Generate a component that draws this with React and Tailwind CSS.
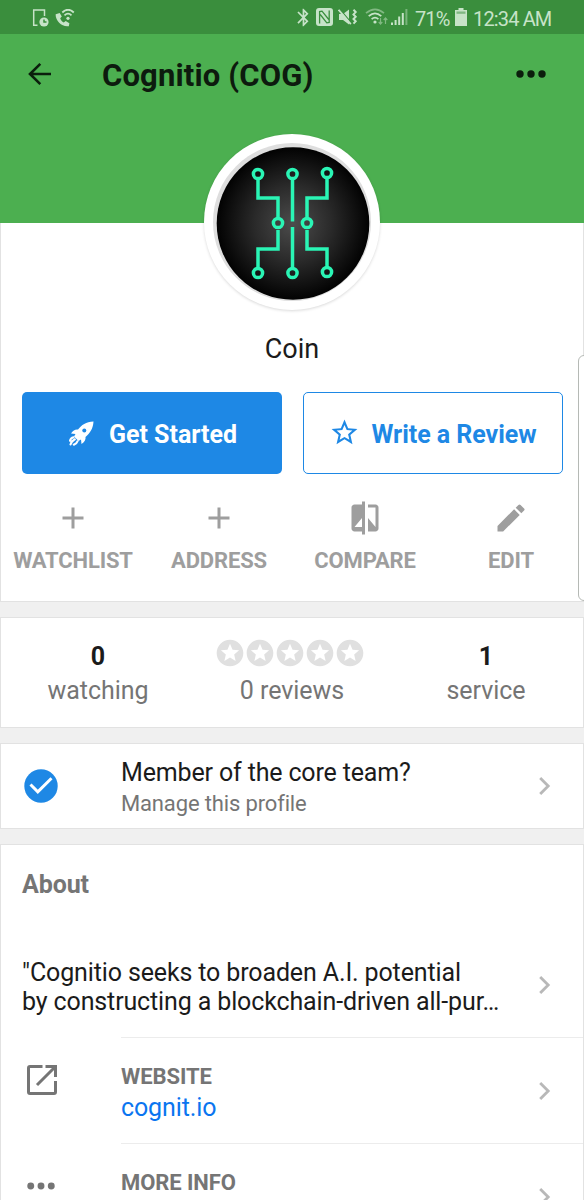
import { MdAdd, MdBluetooth, MdCompare, MdEdit, MdStarBorder, MdStars } from 'react-icons/md';

const STATS = [
  { value: '0', label: 'watching' },
  { rating: true, label: '0 reviews' },
  { value: '1', label: 'service' },
];

const ACTIONS = [
  { label: 'WATCHLIST', icon: MdAdd },
  { label: 'ADDRESS', icon: MdAdd },
  { label: 'COMPARE', icon: MdCompare },
  { label: 'EDIT', icon: MdEdit },
];

export default function App() {
  return (
    <div className="relative w-[584px] h-[1200px] overflow-hidden bg-[#f0f0f0] text-[#1b1b1b] font-[Roboto,sans-serif]">
      <StatusBar />
      <Header />
      <Profile />

      {/* Stats */}
      <div className="mt-[15px] h-[111px] bg-white border border-[#e2e2e2] grid grid-cols-3 pt-[22px]">
        {STATS.map((s) => (
          <div key={s.label} className="flex flex-col items-center">
            <div className="h-[34px] flex items-center text-[25px] font-bold">
              {s.rating ? <Stars /> : s.value}
            </div>
            <div className="h-[34px] text-[25px] leading-[33px] tracking-[-0.05px] text-[#757575]">{s.label}</div>
          </div>
        ))}
      </div>

      {/* Core team */}
      <div className="mt-[15px] h-[86px] bg-white border border-[#e2e2e2] flex items-center">
        <div className="w-[120px] pl-[23px]">
          <svg width="34" height="34" viewBox="0 0 34 34">
            <circle cx="17" cy="17" r="16.7" fill="#1e88e5" />
            <path d="M6.5 15.5l7.3 7.3L27.5 9.2" fill="none" stroke="#fff" strokeWidth="3" />
          </svg>
        </div>
        <div className="flex-1 pt-[3px]">
          <div className="text-[25px] leading-[32px] tracking-[-0.15px]">Member of the core team?</div>
          <div className="text-[22px] leading-[30px] tracking-[-0.15px] text-[#757575]">Manage this profile</div>
        </div>
        <Chevron />
      </div>

      {/* About */}
      <div className="mt-[15px] h-[420px] bg-white border border-[#e2e2e2]">
        <h2 className="h-[88px] pl-[21px] pt-[25px] text-[25px] leading-[30px] tracking-[-0.1px] font-bold text-[#757575]">About</h2>
        <div className="h-[104px] flex items-center pl-[21px]">
          <p className="flex-1 pt-[4px] text-[25px] leading-[29.5px] tracking-[-0.13px] whitespace-nowrap">
            "Cognitio seeks to broaden A.I. potential
            <br />
            by constructing a blockchain-driven all-pur…
          </p>
          <Chevron />
        </div>
        <Row label="WEBSITE" icon={<OpenIcon />}>
          <div className="text-[25px] leading-[32px] tracking-[-0.12px] text-[#0a75f0]">cognit.io</div>
        </Row>
        <Row label="MORE INFO" icon={<Dots className="text-[#757575] ml-px" width={28} />}>
          <div className="h-[32px]" />
        </Row>
      </div>

      {/* Edge panel handle */}
      <div className="absolute left-[578px] top-[355px] w-[12px] h-[246px] rounded-[7px] bg-white border border-[#b5b9b5]" />
    </div>
  );
}

function StatusBar() {
  return (
    <div className="h-[34px] bg-[#3a8e3d] text-[#c7e3c8] flex items-center justify-between pl-[32px] pr-[32px]">
      <div className="flex items-center gap-[6px] pt-px">
        <svg width="17" height="18" viewBox="0 0 17 18" fill="none" stroke="currentColor" strokeWidth="1.5">
          <path d="M5.5 16.3H1.7V1h10.8v6" />
          <circle cx="12" cy="13" r="4.6" fill="currentColor" stroke="none" />
          <path d="M12 10.4V13h2.5" stroke="#3a8e3d" />
        </svg>
        <svg width="20" height="18" viewBox="0 0 20 18" fill="none" stroke="currentColor">
          <path d="M.7 5.2C0 11.5 7 18.5 13.8 17.2l.6-3-3.7-2.2-2 1.5C7 12.6 5.7 10.8 5.2 9.2l1.6-1.6L4.7 3.9z" fill="currentColor" stroke="none" />
          <path d="M7.3 3.5Q13-2 18.8 3.5M9.5 6.3Q13 3 16.5 6.3" strokeWidth="1.8" />
          <circle cx="13" cy="9.3" r="1.6" fill="currentColor" stroke="none" />
        </svg>
      </div>
      <div className="flex items-center">
        <MdBluetooth size={21} className="mr-[2px]" />
        <svg width="17" height="18" viewBox="0 0 17 18" className="mr-[5px]">
          <rect width="17" height="18" rx="3" fill="currentColor" />
          <path d="M3.6 15.5V3.6l2.4-.4 6.8 8.3M13.2 2.5v11.9l-2.4.4L4.2 6.5" fill="none" stroke="#3a8e3d" strokeWidth="1.3" />
        </svg>
        <svg width="20" height="18" viewBox="0 0 20 18" className="mr-[7px]">
          <path d="M1 6h4l6-4.5v15L5 12H1z" fill="currentColor" />
          <path d="M1.6 1L13.5 15" stroke="#3a8e3d" strokeWidth="1.2" />
          <path d="M.6 1.8L12.8 16.2" stroke="currentColor" strokeWidth="1.8" />
          <path d="M15.5 1.8l2.2 2.3-2.2 2.3 2.2 2.3-2.2 2.3 2.2 2.3-2.2 2.3" fill="none" stroke="currentColor" strokeWidth="2" />
        </svg>
        <svg width="24" height="18" viewBox="0 0 24 18" fill="none" stroke="currentColor" strokeWidth="1.7" className="mr-[2px]">
          <path d="M1 5.2Q10-2.6 19 5.2" opacity=".5" />
          <path d="M3.7 8.2Q10 2.5 16.3 8.2M6.6 11.2Q10 8 13.4 11.2" />
          <circle cx="10" cy="14" r="1.6" fill="currentColor" stroke="none" />
          <path d="M15.5 10v6m-1.8-2l1.8 2 1.8-2M20.5 16v-6m-1.8 2l1.8-2 1.8 2" strokeWidth="1.2" opacity=".5" />
        </svg>
        <svg width="17" height="18" viewBox="0 0 17 18" fill="currentColor" className="mr-[7px]">
          <path d="M0 14.5h2V17H0zM3.6 12h2v5h-2zM7.2 8.5h2V17h-2zM10.8 5h2v12h-2z" />
          <path d="M14.4 1h2v16h-2z" opacity=".45" />
        </svg>
        <span className="w-[33px] whitespace-nowrap text-[20px] leading-[34px] tracking-[-0.9px] pt-[3px]">71%</span>
        <svg width="12" height="18" viewBox="0 0 12 18" fill="currentColor" className="ml-[7px] mr-[6px]">
          <path d="M3.5 0h5v2H12v16H0V2h3.5z" />
          <path d="M1.5 3.5h9v2.3h-9z" fill="#3a8e3d" opacity=".5" />
        </svg>
        <span className="w-[79px] whitespace-nowrap text-[20px] leading-[34px] tracking-[-0.85px] pt-[3px]">12:34 AM</span>
      </div>
    </div>
  );
}

function Header() {
  return (
    <div className="h-[189px] bg-[#4caf50] text-[#0b1e0c]">
      <div className="h-[80px] flex items-center pl-[28px] pr-[38px]">
        <svg width="24" height="24" viewBox="0 0 24 24" fill="none" stroke="currentColor" strokeWidth="2.6">
          <path d="M23 12H2.5M12.3 1.8L2 12l10.3 10.2" />
        </svg>
        <h1 className="ml-[50px] mt-[4px] text-[31px] leading-[40px] tracking-[0.15px] font-bold text-[#0d1b0e] flex-1">Cognitio (COG)</h1>
        <Dots width={30} />
      </div>
    </div>
  );
}

function Profile() {
  return (
    <div className="h-[379px] bg-white border-x border-b border-[#e2e2e2] flex flex-col items-center">
      <div className="-mt-[89px] size-[176px] shrink-0 rounded-full bg-white shadow-[0_1px_3px_rgba(0,0,0,0.15)] flex items-center justify-center relative">
        <Logo />
      </div>
      <div className="mt-[22px] text-[27px] leading-[34px]">Coin</div>

      <div className="mt-[26px] flex gap-[21px] text-[25px] font-bold">
        <button className="w-[260px] h-[82px] pt-[3px] pl-[3px] rounded-[5px] bg-[#1e88e5] text-white flex items-center justify-center">
          <RocketIcon />
          <span>Get Started</span>
        </button>
        <button className="w-[260px] h-[82px] pt-[3px] rounded-[5px] border-[1.5px] border-[#1e88e5] text-[#1e88e5] flex items-center justify-center">
          <MdStarBorder size={31} className="mr-[12px] -mt-[4px]" />
          <span className="tracking-[-0.05px]">Write a Review</span>
        </button>
      </div>

      <div className="mt-[24px] w-[584px] grid grid-cols-4 text-[#9e9e9e]">
        {ACTIONS.map((a) => (
          <div key={a.label} className="flex flex-col items-center">
            <div className="h-[40px] flex items-center">
              <a.icon size={36} />
            </div>
            <div className="mt-[6px] text-[22px] leading-[34px] tracking-[-0.15px] font-bold">{a.label}</div>
          </div>
        ))}
      </div>
    </div>
  );
}

function Logo() {
  return (
    <svg width="160" height="160" viewBox="0 0 160 160">
      <defs>
        <radialGradient id="coin">
          <stop offset="0" stopColor="#4c4c4c" />
          <stop offset=".5" stopColor="#2a2a2a" />
          <stop offset="1" stopColor="#020202" />
        </radialGradient>
      </defs>
      <circle cx="80" cy="80" r="79" fill="#dedede" />
      <circle cx="81" cy="81.5" r="76.3" fill="url(#coin)" />
      <g fill="none" stroke="#2af5b5" strokeWidth="3.5">
        <path d="M46 37v19h20v21M80.5 37v42.5M115 37v19H95v21M66 88v19H46v19M80.5 85v41M95 88v19h20v19" />
        {[[46, 32], [80.5, 32], [115, 31], [66, 81], [95, 81], [46, 131], [80.5, 131], [115, 130]].map(([x, y]) => (
          <circle key={`${x}-${y}`} cx={x} cy={y} r="4.6" />
        ))}
      </g>
    </svg>
  );
}

function RocketIcon() {
  return (
    <svg width="25" height="25" viewBox="0 0 25 25" className="mr-[15px] -mt-[2px]">
      <path d="M24.5.5C17 1 12.5 4 9 8.5 6.5 8 4 9.5 2 12.5l4.5.5-1.5 2.5 4.5 4.5 2.5-1.5.5 4.5c3-2 4.5-4.5 4-7C21 12 24 8 24.5.5z" fill="currentColor" />
      <circle cx="15.3" cy="9.6" r="2" fill="#1e88e5" />
      <path d="M4.5 16.2Q1.5 16.8 1 19.8M5.8 18.3Q2.5 20 1.5 23.5M8.5 20.3Q8 22.3 4.8 23.7" fill="none" stroke="currentColor" strokeWidth="2.1" strokeLinecap="round" />
    </svg>
  );
}

function Row({ label, icon, children }) {
  return (
    <div className="h-[106px] flex">
      <div className="w-[120px] shrink-0 flex items-center pl-[25px] pb-[21px]">{icon}</div>
      <div className="flex-1 flex items-center border-t border-[#ececec]">
        <div className="flex-1 pt-[3px]">
          <div className="text-[22px] leading-[31px] tracking-[-0.08px] font-bold text-[#757575]">{label}</div>
          {children}
        </div>
        <Chevron />
      </div>
    </div>
  );
}

function Stars() {
  return (
    <span className="flex text-[#e0e0e0] -mt-[9px] -ml-[4px]">
      {[1, 2, 3, 4, 5].map((n) => (
        <MdStars key={n} size={32} className="-mx-px" />
      ))}
    </span>
  );
}

function Chevron() {
  return (
    <svg width="12" height="18" viewBox="0 0 12 18" className="mr-[32px] shrink-0" fill="none" stroke="#b8b8b8" strokeWidth="2.8">
      <path d="M1.2 1l8 8-8 8" />
    </svg>
  );
}

function OpenIcon() {
  return (
    <svg width="32" height="32" viewBox="0 0 32 32" fill="none" stroke="#757575" strokeWidth="3">
      <path d="M16.5 2.5H4Q2.5 2.5 2.5 4v24q0 1.5 1.5 1.5h24q1.5 0 1.5-1.5V17" />
      <path d="M19.5 2.5h10V13M29 3L11 21" />
    </svg>
  );
}

function Dots({ width, className }) {
  return (
    <svg width={width} height="8" viewBox="0 0 30 8" fill="currentColor" className={className}>
      <circle cx="4" cy="4" r="3.7" />
      <circle cx="15" cy="4" r="3.7" />
      <circle cx="26" cy="4" r="3.7" />
    </svg>
  );
}
